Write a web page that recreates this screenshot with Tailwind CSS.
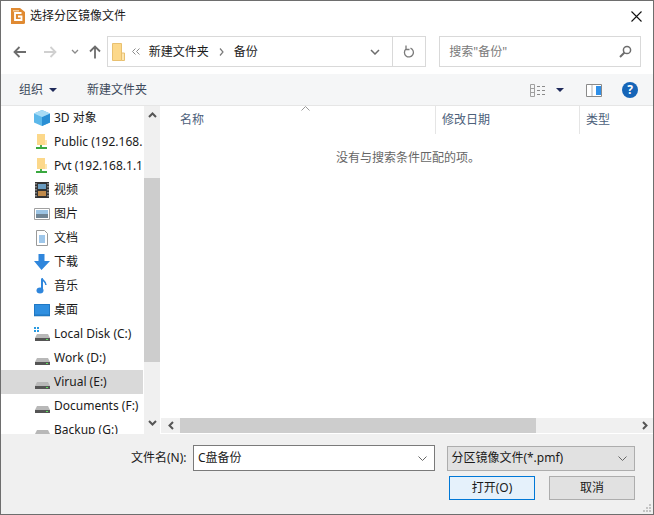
<!DOCTYPE html>
<html lang="zh-CN">
<head>
  <meta charset="UTF-8" />
  <title>选择分区镜像文件</title>
  <script src="https://cdn.jsdelivr.net/npm/@tailwindcss/browser@4"></script>
</head>
<body class="bg-white overflow-hidden">
  <div class="w-[654px] h-[515px] border border-[#6e6e6e] flex flex-col overflow-hidden bg-white text-[12px] leading-[16px] text-[#1a1a1a] font-['Noto_Sans','Noto_Sans_CJK_SC',sans-serif]">

    <!-- Title bar -->
    <div class="h-[30px] shrink-0 flex items-center pl-[9px] pr-[11px]">
      <svg width="15" height="16" viewBox="0 0 15 16" class="mr-[5px]">
        <path d="M1 0h9l5 4v10.500a1.500 1.500 0 0 1-1.500 1.500H1z" fill="#e08a32"/>
        <path d="M11.500 5H5v7h6.500V8.500H8" fill="none" stroke="#fff" stroke-width="1.800"/>
        <path d="M3 2.800h6" stroke="#f8d9b0" stroke-width="1.200"/>
      </svg>
      <span class="flex-1">选择分区镜像文件</span>
      <svg width="11" height="11" viewBox="0 0 11 11"><path d="M.5.500l10 10M10.500.500l-10 10" stroke="#111" stroke-width="1.100" fill="none"/></svg>
    </div>

    <!-- Nav row -->
    <div class="h-[43px] shrink-0 flex items-start pt-[5px] pl-[12px] pr-[12px]">
      <div class="w-[94px] h-[31px] flex items-center">
        <svg width="14" height="12" viewBox="0 0 14 12"><path d="M13 6H2M6.500 1 1.500 6l5 5" fill="none" stroke="#6d6d6d" stroke-width="1.800"/></svg>
        <svg width="14" height="12" viewBox="0 0 14 12" class="ml-[16px]"><path d="M1 6h11M7.500 1l5 5-5 5" fill="none" stroke="#d0d0d0" stroke-width="1.800"/></svg>
        <svg width="8" height="6" viewBox="0 0 8 6" class="ml-[14px]"><path d="M1 1l3 3 3-3" fill="none" stroke="#8a8a8a" stroke-width="1.300"/></svg>
        <svg width="12" height="14" viewBox="0 0 12 14" class="ml-[10px]"><path d="M6 13.500V2M1 6.500l5-5 5 5" fill="none" stroke="#6d6d6d" stroke-width="1.800"/></svg>
      </div>
      <div class="w-[320px] h-[31px] border border-[#d9d9d9] flex items-center">
        <svg width="13" height="18" viewBox="0 0 13 18" class="ml-[4px] mr-[7px]">
          <path d="M.5.500h9v17h-9z" fill="#fcd88a" stroke="#e8c070"/>
          <path d="M9.500 10h3v7.500h-3z" fill="#fde6b0" stroke="#e8c070"/>
        </svg>
        <svg width="8" height="7" viewBox="0 0 8 7" class="mr-[9px]"><path d="M3.500.500l-3 3 3 3M7.500.500l-3 3 3 3" fill="none" stroke="#8a8a8a"/></svg>
        <span>新建文件夹</span>
        <svg width="5" height="8" viewBox="0 0 5 8" class="mx-[10px]"><path d="M1 .500l3 3.500-3 3.500" fill="none" stroke="#7a7a7a" stroke-width="1.200"/></svg>
        <span>备份</span>
        <div class="flex-1 flex justify-end pr-[12px]">
          <svg width="10" height="6" viewBox="0 0 10 6"><path d="M1 1l4 4 4-4" fill="none" stroke="#6d6d6d" stroke-width="1.500"/></svg>
        </div>
        <div class="w-[33px] h-full border-l border-[#d9d9d9] flex items-center justify-center">
          <svg width="12" height="13" viewBox="0 0 12 13"><path d="M7.500 3.200A4.500 4.500 0 1 1 3 4M3 .500V4.500h3.500" fill="none" stroke="#7a7a7a" stroke-width="1.300"/></svg>
        </div>
      </div>
      <div class="w-[202px] h-[31px] ml-[13px] border border-[#d9d9d9] flex items-center pl-[9px] pr-[8px] text-[#7a7a7a]">
        <span class="flex-1">搜索"备份"</span>
        <svg width="13" height="13" viewBox="0 0 13 13"><circle cx="8" cy="5" r="3.600" fill="none" stroke="#6d6d6d" stroke-width="1.500"/><path d="M5.500 7.500 1 12" stroke="#6d6d6d" stroke-width="2"/></svg>
      </div>
    </div>

    <!-- Toolbar -->
    <div class="h-[32px] shrink-0 bg-[#f5f6f7] border-b border-[#e6e6e6] flex items-center pt-[1px] pl-[18px] pr-[15px] text-[#3d4a5c]">
      <span>组织</span>
      <svg width="8" height="4" viewBox="0 0 8 4" class="ml-[6px]"><path d="M0 0h8L4 4z" fill="#1f2a5a"/></svg>
      <span class="ml-[30px] flex-1">新建文件夹</span>
      <svg width="16" height="13" viewBox="0 0 16 13" class="mr-[10px]">
        <path d="M.500.500h4v12h-4zM.500 4.500h4M.500 8.500h4" fill="none" stroke="#a0a0a0"/>
        <path d="M7 2.500h3M12 2.500h3M7 6.500h3M12 6.500h3M7 10.500h3M12 10.500h3" stroke="#8a8a8a"/>
      </svg>
      <svg width="8" height="4" viewBox="0 0 8 4" class="mr-[22px]"><path d="M0 0h8L4 4z" fill="#1f2a5a"/></svg>
      <svg width="16" height="13" viewBox="0 0 16 13" class="mr-[20px]">
        <path d="M.500.500h15v12H.500z" fill="#fff" stroke="#8a8a8a"/>
        <path d="M6 1v11" stroke="#b0b0b0"/>
        <path d="M10 2h5v9h-5z" fill="#2f8fe8"/>
      </svg>
      <div class="w-[16px] h-[16px] rounded-full bg-[#1565b8] text-white text-[12px] font-bold flex items-center justify-center">?</div>
    </div>

    <!-- Main -->
    <div class="h-[328px] shrink-0 flex overflow-hidden">
      <!-- Sidebar -->
      <div class="w-[143px] shrink-0 overflow-hidden pr-[1px]">
        <div class="h-[24px] flex items-center pl-[32px]">
          <svg width="18" height="16" viewBox="0 0 18 16" class="mr-[3px] shrink-0"><path d="M9 0l8 3.500v9L9 16 1 12.500v-9z" fill="#5cb8ea"/><path d="M9 7v9l8-3.500v-9z" fill="#2a8fd4"/><path d="M9 0l8 3.500L9 7 1 3.500z" fill="#a8dcf5"/></svg>
          <span class="whitespace-nowrap">3D 对象</span>
        </div>
        <div class="h-[24px] flex items-center pl-[32px] overflow-hidden">
          <svg width="18" height="16" viewBox="0 0 18 16" class="mr-[3px] shrink-0"><path d="M4 0h8v11H4z" fill="#fcd88a"/><path d="M12 6h2v5h-2z" fill="#fde6b0"/><path d="M8 11v2" stroke="#4caf50" stroke-width="2"/><path d="M3 14h11" stroke="#3aa83f" stroke-width="2"/></svg>
          <span class="whitespace-nowrap">Public (192.168.</span>
        </div>
        <div class="h-[24px] flex items-center pl-[32px] overflow-hidden">
          <svg width="18" height="16" viewBox="0 0 18 16" class="mr-[3px] shrink-0"><path d="M4 0h8v11H4z" fill="#fcd88a"/><path d="M12 6h2v5h-2z" fill="#fde6b0"/><path d="M8 11v2" stroke="#4caf50" stroke-width="2"/><path d="M3 14h11" stroke="#3aa83f" stroke-width="2"/></svg>
          <span class="whitespace-nowrap">Pvt (192.168.1.1</span>
        </div>
        <div class="h-[24px] flex items-center pl-[32px]">
          <svg width="18" height="16" viewBox="0 0 18 16" class="mr-[3px] shrink-0"><path d="M2 0h14v16H2z" fill="#333"/><path d="M5 2h8v5H5z" fill="#6a9cc0"/><path d="M5 9h8v5H5z" fill="#c08a4a"/><path d="M3 1v14M15 1v14" stroke="#ccc" stroke-dasharray="1.500 1.500"/></svg>
          <span>视频</span>
        </div>
        <div class="h-[24px] flex items-center pl-[32px]">
          <svg width="18" height="16" viewBox="0 0 18 16" class="mr-[3px] shrink-0"><path d="M1.500 2.500h15v11h-15z" fill="#fff" stroke="#a0a0a0"/><path d="M3 4h12v4H3z" fill="#9cc4e4"/><path d="M3 8h12v4H3z" fill="#6f8494"/></svg>
          <span>图片</span>
        </div>
        <div class="h-[24px] flex items-center pl-[32px]">
          <svg width="18" height="16" viewBox="0 0 18 16" class="mr-[3px] shrink-0"><path d="M3.500.500h8l3 3v12h-11z" fill="#fff" stroke="#9a9a9a"/><path d="M6 6h6M6 8h6M6 10h6M6 12h6" stroke="#3f8fd6"/></svg>
          <span>文档</span>
        </div>
        <div class="h-[24px] flex items-center pl-[32px]">
          <svg width="18" height="16" viewBox="0 0 18 16" class="mr-[3px] shrink-0"><path d="M5.500 0h6v7H17L8.500 16 1 7h4.500z" fill="#2f86dc"/></svg>
          <span>下载</span>
        </div>
        <div class="h-[24px] flex items-center pl-[32px]">
          <svg width="18" height="16" viewBox="0 0 18 16" class="mr-[3px] shrink-0"><path d="M9 1v11" stroke="#2f86dc" stroke-width="2"/><ellipse cx="7" cy="12.500" rx="3.500" ry="3" fill="#2f86dc"/><path d="M9 0c0 3 4 3 4 7" fill="none" stroke="#2f86dc" stroke-width="1.500"/></svg>
          <span>音乐</span>
        </div>
        <div class="h-[24px] flex items-center pl-[32px]">
          <svg width="18" height="16" viewBox="0 0 18 16" class="mr-[3px] shrink-0"><path d="M1 2h16v12H1z" fill="#2f8fe0"/><path d="M1 13.500h16" stroke="#15609f" stroke-width="1.500"/><path d="M1.500 2.500h15v11h-15z" fill="none" stroke="#1f78c4"/></svg>
          <span>桌面</span>
        </div>
        <div class="h-[24px] flex items-center pl-[32px]">
          <svg width="18" height="16" viewBox="0 0 18 16" class="mr-[3px] shrink-0"><path d="M1 1h2v2H1zM4 1h2v2H4zM1 4h2v2H1zM4 4h2v2H4z" fill="#2a9ae0"/><path d="M4 8h11l2 4H2z" fill="#b8b8b8"/><path d="M2 12h15v3H2z" fill="#555"/><path d="M13 13h2v1h-2z" fill="#5fe05f"/></svg>
          <span class="whitespace-nowrap">Local Disk (C:)</span>
        </div>
        <div class="h-[24px] flex items-center pl-[32px]">
          <svg width="18" height="16" viewBox="0 0 18 16" class="mr-[3px] shrink-0"><path d="M4 8h11l2 4H2z" fill="#b8b8b8"/><path d="M2 12h15v3H2z" fill="#555"/><path d="M13 13h2v1h-2z" fill="#5fe05f"/></svg>
          <span class="whitespace-nowrap">Work (D:)</span>
        </div>
        <div class="h-[24px] flex items-center pl-[32px] bg-[#d9d9d9]">
          <svg width="18" height="16" viewBox="0 0 18 16" class="mr-[3px] shrink-0"><path d="M4 8h11l2 4H2z" fill="#b8b8b8"/><path d="M2 12h15v3H2z" fill="#555"/><path d="M13 13h2v1h-2z" fill="#5fe05f"/></svg>
          <span class="whitespace-nowrap">Virual (E:)</span>
        </div>
        <div class="h-[24px] flex items-center pl-[32px]">
          <svg width="18" height="16" viewBox="0 0 18 16" class="mr-[3px] shrink-0"><path d="M4 8h11l2 4H2z" fill="#b8b8b8"/><path d="M2 12h15v3H2z" fill="#555"/><path d="M13 13h2v1h-2z" fill="#5fe05f"/></svg>
          <span class="whitespace-nowrap">Documents (F:)</span>
        </div>
        <div class="h-[24px] shrink-0 flex items-center pl-[32px]">
          <svg width="18" height="16" viewBox="0 0 18 16" class="mr-[3px] shrink-0"><path d="M4 8h11l2 4H2z" fill="#b8b8b8"/><path d="M2 12h15v3H2z" fill="#555"/><path d="M13 13h2v1h-2z" fill="#5fe05f"/></svg>
          <span class="whitespace-nowrap">Backup (G:)</span>
        </div>
      </div>

      <!-- Sidebar scrollbar -->
      <div class="w-[16px] shrink-0 bg-[#f0f0f0] flex flex-col">
        <div class="h-[17px] flex items-center justify-center">
          <svg width="9" height="6" viewBox="0 0 9 6"><path d="M1 5l3.500-3.500L8 5" fill="none" stroke="#555" stroke-width="2"/></svg>
        </div>
        <div class="h-[55px]"></div>
        <div class="h-[184px] bg-[#cdcdcd]"></div>
        <div class="flex-1"></div>
        <div class="h-[22px] flex items-center justify-center">
          <svg width="9" height="6" viewBox="0 0 9 6"><path d="M1 1l3.500 3.500L8 1" fill="none" stroke="#555" stroke-width="2"/></svg>
        </div>
      </div>

      <!-- File pane -->
      <div class="flex-1 flex flex-col pl-[1px] min-w-0">
        <div class="h-[28px] shrink-0 flex text-[#4c607a] relative">
          <svg width="9" height="5" viewBox="0 0 9 5" class="absolute left-[140px] top-0"><path d="M.500 4.500l4-4 4 4" fill="none" stroke="#999"/></svg>
          <div class="w-[275px] border-r border-[#e5e5e5] pl-[19px] pt-[6px]">名称</div>
          <div class="w-[144px] border-r border-[#e5e5e5] pl-[6px] pt-[6px]">修改日期</div>
          <div class="flex-1 pl-[6px] pt-[6px]">类型</div>
        </div>
        <div class="flex-1 text-center text-[#666] pt-[16px] pl-[2px]">没有与搜索条件匹配的项。</div>
        <div class="h-[15px] shrink-0 mb-[1px] bg-[#f0f0f0] flex items-center">
          <div class="w-[19px] flex justify-center">
            <svg width="6" height="9" viewBox="0 0 6 9"><path d="M5 1 1.500 4.500 5 8" fill="none" stroke="#555" stroke-width="2"/></svg>
          </div>
          <div class="w-[356px] h-full bg-[#cdcdcd]"></div>
          <div class="flex-1"></div>
          <div class="w-[17px] flex justify-center">
            <svg width="6" height="9" viewBox="0 0 6 9"><path d="M1 1l3.500 3.500L1 8" fill="none" stroke="#555" stroke-width="2"/></svg>
          </div>
        </div>
      </div>
    </div>

    <!-- Bottom panel -->
    <div class="flex-1 bg-[#f0f0f0] relative pt-[11px] pl-[130px] pr-[18px]">
      <div class="flex items-center h-[26px]">
        <span class="w-[62px] whitespace-nowrap">文件名(N):</span>
        <div class="w-[243px] h-[26px] bg-white border border-[#7a7a7a] flex items-center pl-[4px] pr-[7px]">
          <span class="flex-1">C盘备份</span>
          <svg width="9" height="5" viewBox="0 0 9 5"><path d="M.500.500l4 4 4-4" fill="none" stroke="#666"/></svg>
        </div>
        <div class="w-[188px] h-[25px] ml-[12px] bg-[#e1e1e1] border border-[#adadad] flex items-center pl-[3px] pr-[7px]">
          <span class="flex-1 whitespace-nowrap">分区镜像文件(*.pmf)</span>
          <svg width="9" height="5" viewBox="0 0 9 5"><path d="M.500.500l4 4 4-4" fill="none" stroke="#666"/></svg>
        </div>
      </div>
      <div class="flex justify-end mt-[5px] gap-[14px]">
        <div class="w-[86px] h-[24px] bg-[#e5f1fb] border border-[#0078d7] flex items-center justify-center">打开(O)</div>
        <div class="w-[86px] h-[24px] bg-[#e1e1e1] border border-[#adadad] flex items-center justify-center">取消</div>
      </div>
      <svg width="9" height="9" viewBox="0 0 9 9" class="absolute right-[1px] bottom-[1px]"><path d="M6 0h2v2H6zM3 3h2v2H3zM6 3h2v2H6zM0 6h2v2H0zM3 6h2v2H3zM6 6h2v2H6z" fill="#c4c4c4"/></svg>
    </div>
  </div>
</body>
</html>
